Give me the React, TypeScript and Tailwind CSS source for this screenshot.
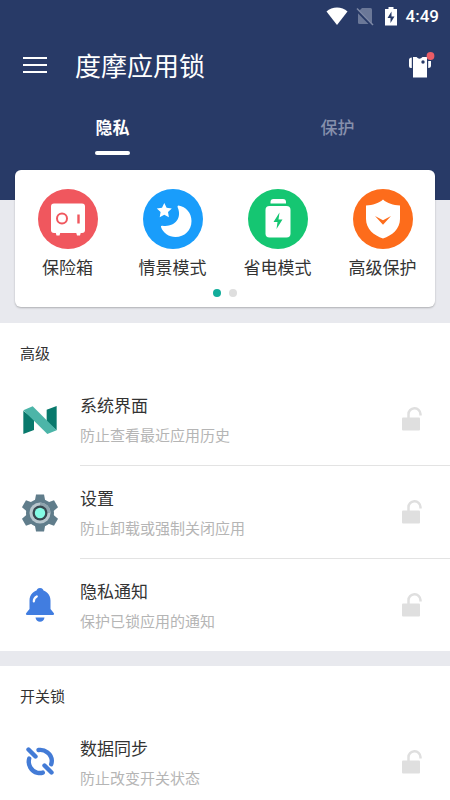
import type { ReactNode } from "react";

const tabs = ["隐私", "保护"];

function SafeIcon() {
  return (
    <svg viewBox="0 0 60 60" className="size-15" aria-hidden="true">
      <circle cx="30" cy="30" r="30" fill="#f0575e" />
      <rect x="13" y="14.5" width="34" height="29.5" rx="3" fill="#fff" />
      <path d="M17.5 43h5l-1 3.5h-3zM38 43h5l-1 3.5h-3z" fill="#fff" />
      <circle cx="24" cy="29.5" r="5" fill="none" stroke="#f0575e" strokeWidth="2" />
      <path d="M40.5 25.5v9" stroke="#f0575e" strokeWidth="2.4" />
    </svg>
  );
}

function MoonIcon() {
  return (
    <svg viewBox="0 0 60 60" className="size-15" aria-hidden="true">
      <circle cx="30" cy="30" r="30" fill="#199dfb" />
      <path d="M35.5 16.5C43 17.5 48.5 24 48.5 32C48.5 41.5 41.5 48 32.5 48C26 48 20 44 18 38Q17.5 36.5 19.5 36.7C31 38.5 39.5 29.5 34.7 18.5Q34 16.5 35.5 16.5Z" fill="#fff" />
      <path d="M21.3 14l2.3 4.7 5.2.7-3.8 3.6.9 5.2-4.6-2.5-4.6 2.5.9-5.2-3.8-3.6 5.2-.7z" fill="#fff" />
    </svg>
  );
}

function PowerIcon() {
  return (
    <svg viewBox="0 0 60 60" className="size-15" aria-hidden="true">
      <circle cx="30" cy="30" r="30" fill="#15c672" />
      <path d="M22.5 14.5v-1.5a3 3 0 0 1 3-3h9.5a3 3 0 0 1 3 3v1.5z" fill="#fff" />
      <rect x="17.5" y="17" width="25" height="31.5" rx="4" fill="#fff" />
      <path d="M31.5 23.5l-6 9.5h4l-1 7 6-9.5h-4z" fill="#15c672" />
    </svg>
  );
}

function ShieldIcon() {
  return (
    <svg viewBox="0 0 60 60" className="size-15" aria-hidden="true">
      <circle cx="30" cy="30" r="30" fill="#fd6c1b" />
      <path d="M30 10.5C34.5 14.5 40 16 47 16.5V30C47 40 39 46.5 30 49.5C21 46.5 13 40 13 30V16.5C20 16 25.5 14.5 30 10.5Z" fill="#fff" />
      <path d="M22 27l8 4.2 8-4.2-8 8.8z" fill="#fd6c1b" />
    </svg>
  );
}

function NougatIcon() {
  return (
    <svg viewBox="60 192 120 120" className="size-10" aria-hidden="true">
      <path d="M70 224L102 250V282L70 294ZM140 221L170 210V283L140 258Z" fill="#08796c" />
      <path d="M98 211L170 283L142 294L70 223Z" fill="#4cb5a8" />
    </svg>
  );
}

function GearIcon() {
  return (
    <svg viewBox="0 0 40 40" className="size-10" aria-hidden="true">
      <g fill="#607d8b">
        <circle cx="20" cy="20" r="14" />
        {[0, 60, 120, 180, 240, 300].map((angle) => (
          <path key={angle} d="M16 1.5h8l1.5 8h-11z" transform={`rotate(${angle} 20 20)`} />
        ))}
      </g>
      <circle cx="20" cy="20" r="10.5" fill="#b8c6cd" />
      <path d="M20 9.5A10.5 10.5 0 0 1 30.5 20L20 20Z" fill="#8fa4ae" />
      <circle cx="20" cy="20" r="7.5" fill="#37474f" />
      <circle cx="20" cy="20" r="5.2" fill="#84fbe4" />
    </svg>
  );
}

function BellIcon() {
  return (
    <svg viewBox="0 0 40 40" className="size-10" aria-hidden="true" fill="#417de0">
      <circle cx="20" cy="6.5" r="3.5" />
      <path d="M20 5c6 0 10.5 4.5 10.5 10.5V24l3.2 4c.8 1.2.3 2-.9 2H7.2c-1.2 0-1.7-.8-.9-2l3.2-4v-8.5C9.5 9.5 14 5 20 5z" />
      <path d="M15.5 32.5h9c-.5 3-2.3 4.3-4.5 4.3s-4-1.3-4.5-4.3z" />
      <path d="M13.8 16.5c0-2.2 1-4 3-5" fill="none" stroke="#fff" strokeWidth="2.2" strokeLinecap="round" />
    </svg>
  );
}

function SyncIcon() {
  return (
    <svg viewBox="0 0 40 40" className="size-10" aria-hidden="true" fill="none" stroke="#437bd6" strokeWidth="4.4" strokeLinecap="round">
      <path d="M8.5 7.5L15.5 14.5M24.5 23.5L31.5 30.5" />
      <path d="M9.2 16.5C7.5 22.5 11 29.5 17.5 30.8Q20.5 31.3 22.8 30.6" />
      <path d="M18.5 8C25 7 31.5 12 31.8 18.5Q31.8 20.5 31.2 22.2" />
    </svg>
  );
}

function UnlockIcon() {
  return (
    <svg viewBox="0 0 20 24" className="h-6 w-5" aria-hidden="true">
      <rect x="0" y="10.5" width="18" height="13" rx="1" fill="#dfdfdf" />
      <path d="M6.5 11V7.5a6 6 0 0 1 12-.5v1.5" fill="none" stroke="#dfdfdf" strokeWidth="2.5" />
    </svg>
  );
}

function StatusBar() {
  return (
    <div className="flex h-[31px] items-center justify-end pr-[11px]">
      <svg viewBox="0 0 22 20" className="h-5 w-[22px]" aria-hidden="true">
        <path d="M11 19L.5 5.5C6 .3 16 .3 21.5 5.5Z" fill="#fff" />
      </svg>
      <svg viewBox="0 0 18 20" className="ml-2 h-5 w-[18px]" aria-hidden="true">
        <path d="M6 2h8.5q1.5 0 1.5 1.5V18H3.5q-1.5 0-1.5-1.5V6z" fill="#6b7898" />
        <path d="M0 3l16.5 17" stroke="#283a67" strokeWidth="3" />
        <path d="M1 2.5l16 16.5" stroke="#7e89a6" strokeWidth="1.5" />
      </svg>
      <svg viewBox="0 0 14 20" className="ml-[10px] h-5 w-[14px]" aria-hidden="true">
        <path d="M4.5 1h5v2H13v16.5H1V3h3.5z" fill="#fff" />
        <path d="M7.5 5.5L3.5 12H6.5V17L10.5 10.5H7.5Z" fill="#283a67" />
      </svg>
      <span className="ml-2 font-['Roboto',sans-serif] text-[17px] leading-6 font-medium text-white">4:49</span>
    </div>
  );
}

function Header() {
  return (
    <header className="h-[200px] bg-[#283a67]">
      <StatusBar />
      <div className="flex h-[68px] items-center px-[18px] text-white">
        <button type="button" aria-label="菜单" className="flex w-[34px] justify-center">
          <svg viewBox="0 0 24 18" className="h-[18px] w-6" aria-hidden="true">
            <path d="M0 2h24M0 9h24M0 16h24" stroke="#fff" strokeWidth="2.2" />
          </svg>
        </button>
        <h1 className="ml-[23px] flex-1 text-[26px] leading-8">度摩应用锁</h1>
        <button type="button" aria-label="主题">
          <svg viewBox="0 0 28 28" className="size-7 overflow-visible" aria-hidden="true">
            <path d="M9 6H12.5Q15.5 9.5 18.500 6H23V26.500H9Z" fill="#fff" />
            <path d="M7.800 6.500V17H6.800Q5 17 5 15V9Q5 6.800 7.800 6.500ZM24.200 10H27V14.500Q27 17 24.200 17Z" fill="#fff" />
            <circle cx="19" cy="11" r="1.700" fill="#283a67" />
            <circle cx="26.500" cy="5" r="3.900" fill="#ea5c66" />
          </svg>
        </button>
      </div>
      <div role="tablist" className="grid grid-cols-2 pt-4">
        {tabs.map((tab, i) => (
          <button
            key={tab}
            type="button"
            role="tab"
            aria-selected={i === 0}
            className={
              i === 0
                ? "flex flex-col items-center gap-3 text-[17px] leading-6 font-bold text-white"
                : "flex flex-col items-center gap-3 text-[17px] leading-6 font-medium text-[#8690ac]"
            }
          >
            {tab}
            {i === 0 && <span className="h-1 w-[35px] rounded-full bg-white" />}
          </button>
        ))}
      </div>
    </header>
  );
}

const shortcuts: { label: string; icon: ReactNode }[] = [
  { label: "保险箱", icon: <SafeIcon /> },
  { label: "情景模式", icon: <MoonIcon /> },
  { label: "省电模式", icon: <PowerIcon /> },
  { label: "高级保护", icon: <ShieldIcon /> },
];

function Shortcuts() {
  return (
    <div className="relative mx-[15px] -mt-[30px] mb-4 rounded-md bg-white pt-[19px] pb-[10px] shadow-[0_1px_2px_rgba(0,0,0,0.25)]">
      <div className="grid grid-cols-4">
        {shortcuts.map(({ label, icon }) => (
          <button key={label} type="button" className="flex flex-col items-center gap-[6px] text-[17px] leading-6 whitespace-nowrap text-[#333]">
            {icon}
            {label}
          </button>
        ))}
      </div>
      <div className="mt-[10px] flex justify-center gap-2">
        <span className="size-2 rounded-full bg-[#12ad9b]" />
        <span className="size-2 rounded-full bg-[#dedede]" />
      </div>
    </div>
  );
}

type Item = { title: string; desc: string; icon: ReactNode };

const sections: { name: string; items: Item[] }[] = [
  {
    name: "高级",
    items: [
      { title: "系统界面", desc: "防止查看最近应用历史", icon: <NougatIcon /> },
      { title: "设置", desc: "防止卸载或强制关闭应用", icon: <GearIcon /> },
      { title: "隐私通知", desc: "保护已锁应用的通知", icon: <BellIcon /> },
    ],
  },
  {
    name: "开关锁",
    items: [{ title: "数据同步", desc: "防止改变开关状态", icon: <SyncIcon /> }],
  },
];

function Row({ item, last }: { item: Item; last: boolean }) {
  return (
    <li className="flex items-stretch pl-5">
      <div className="flex w-[60px] items-center">{item.icon}</div>
      <div className={last ? "flex flex-1 items-center pr-7" : "flex flex-1 items-center border-b border-[#e3e3e3] pr-7"}>
        <div className="flex-1 pt-5 pb-5">
          <h3 className="text-[17px] leading-6 text-[#333]">{item.title}</h3>
          <p className="mt-2 text-[15px] leading-5 text-[#b5b5b5]">{item.desc}</p>
        </div>
        <button type="button" aria-label={`锁定${item.title}`}>
          <UnlockIcon />
        </button>
      </div>
    </li>
  );
}

export default function App() {
  return (
    <div className="h-screen overflow-y-auto bg-[#e8e9ee] font-['Noto_Sans_CJK_SC',sans-serif] [scrollbar-width:none]">
      <Header />
      <Shortcuts />
      <main className="flex flex-col gap-[15px]">
        {sections.map((section) => (
          <section key={section.name} className="bg-white">
            <h2 className="px-5 pt-5 pb-[10px] text-[15px] leading-5 text-[#333]">{section.name}</h2>
            <ul>
              {section.items.map((item, i) => (
                <Row key={item.title} item={item} last={i === section.items.length - 1} />
              ))}
            </ul>
          </section>
        ))}
      </main>
    </div>
  );
}
